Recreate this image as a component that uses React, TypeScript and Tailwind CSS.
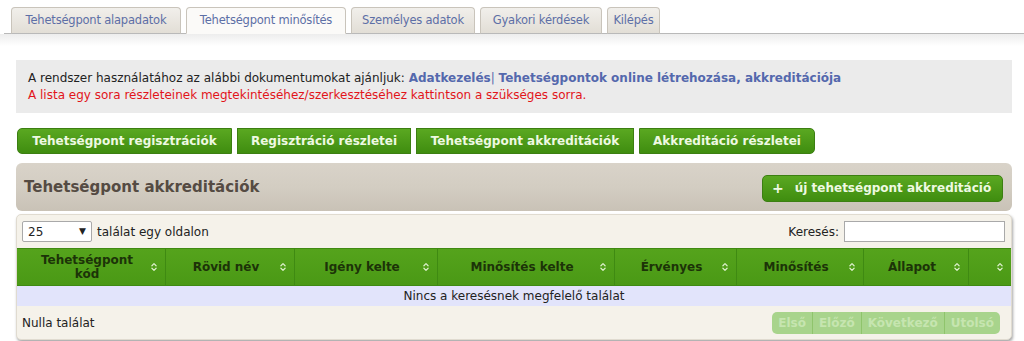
import { ChevronsUpDown } from "lucide-react";

const TABS = [
	{ label: "Tehetségpont alapadatok", active: false, w: "w-[170px]" },
	{ label: "Tehetségpont minősítés", active: true, w: "w-[160px]" },
	{ label: "Személyes adatok", active: false, w: "w-[124px]" },
	{ label: "Gyakori kérdések", active: false, w: "w-[122px]" },
	{ label: "Kilépés", active: false, w: "w-[53px]" },
];

const NAV_BUTTONS = [
	{ label: "Tehetségpont regisztrációk", className: "w-[215px] rounded-l-[5px]" },
	{ label: "Regisztráció részletei", className: "w-[174px]" },
	{ label: "Tehetségpont akkreditációk", className: "w-[218px]" },
	{ label: "Akkreditáció részletei", className: "w-[176px] rounded-r-[5px]" },
];

const COLUMNS = [
	{ label: "Tehetségpont kód", w: "w-[149px]" },
	{ label: "Rövid név", w: "w-[129px]" },
	{ label: "Igény kelte", w: "w-[143px]" },
	{ label: "Minősítés kelte", w: "w-[177px]" },
	{ label: "Érvényes", w: "w-[122px]" },
	{ label: "Minősítés", w: "w-[127px]" },
	{ label: "Állapot", w: "w-[105px]" },
	{ label: "", w: "flex-1" },
];

function SortIcon() {
	return <ChevronsUpDown className="w-[10px] h-[10px] text-[#dcefcb] shrink-0" strokeWidth={3} />;
}

export default function App() {
	return (
		<div className="w-[1024px] h-[341px] bg-white overflow-hidden font-['DejaVu_Sans',sans-serif] text-[12px] text-[#222]">
			{/* tabs */}
			<div className="flex items-end gap-[5px] pl-[7px] pt-[7px] h-[34px] border-b border-[#b9b9b9] ml-[4px]">
				{TABS.map((t) => (
					<div
						key={t.label}
						className={
							"h-[27px] -mb-px flex items-center justify-center whitespace-nowrap rounded-t-[4px] border border-[#c9c4bb] text-[#5d6fa6] text-[11.5px] tracking-[-0.2px] " +
							t.w +
							" " +
							(t.active ? "bg-[#fbfaf8] border-b-[#fbfaf8]" : "bg-gradient-to-b from-[#f1efeb] to-[#e2ded6] border-b-[#b9b9b9]")
						}
					>
						{t.label}
					</div>
				))}
			</div>
			<div className="h-[12px] bg-gradient-to-b from-[#ededed] to-white" />

			<div className="px-[16px] pt-[14px]">
				{/* info box */}
				<div className="bg-[#ebebeb] h-[53px] pl-[12px] pt-[10px] leading-[17px] w-[996px]">
					<div>
						A rendszer használatához az alábbi dokumentumokat ajánljuk:{" "}
						<span className="font-bold text-[#5468ad]">Adatkezelés</span>
						<span className="text-[#5468ad]">|</span>{" "}
						<span className="font-bold text-[#5468ad]">Tehetségpontok online létrehozása, akkreditációja</span>
					</div>
					<div className="text-[#e2141a]">
						A lista egy sora részleteinek megtekintéséhez/szerkesztéséhez kattintson a szükséges sorra.
					</div>
				</div>

				{/* nav buttons */}
				<div className="flex gap-[5px] mt-[15px] pl-[1px]">
					{NAV_BUTTONS.map((b) => (
						<div
							key={b.label}
							className={
								"h-[26px] flex items-center justify-center font-bold text-[#eef9e2] bg-gradient-to-b from-[#5aa821] to-[#3f8d0f] border border-[#3c7f12] " +
								b.className
							}
						>
							{b.label}
						</div>
					))}
				</div>

				{/* panel header */}
				<div className="mt-[9px] h-[48px] w-[996px] rounded-[6px] bg-gradient-to-b from-[#d9d3c9] via-[#d3cdc2] to-[#c9c2b6] flex items-center justify-between pl-[8px] pr-[9px]">
					<div className="font-bold text-[15px] text-[#554b43]">Tehetségpont akkreditációk</div>
					<div className="h-[27px] w-[241px] rounded-[5px] bg-gradient-to-b from-[#5aa821] to-[#3f8d0f] border border-[#3c7f12] flex items-center pl-[9px] gap-[11px] font-bold text-[#eef9e2] mt-[2px]">
						<span className="text-[14px]">+</span>
						<span>új tehetségpont akkreditáció</span>
					</div>
				</div>

				{/* table wrapper */}
				<div className="mt-[3px] w-[996px] h-[126px] rounded-[5px] bg-[#f5f2ea] border border-[#e0dbd0] shadow-[1px_2px_3px_rgba(0,0,0,0.35)] overflow-hidden flex flex-col">
					<div className="h-[33px] flex items-center justify-between pl-[5px] pr-[6px]">
						<div className="flex items-center gap-[5px]">
							<div className="w-[70px] h-[21px] bg-white border border-[#a9a9a9] rounded-[2px] flex items-center justify-between px-[5px] text-[12px]">
								<span>25</span>
								<span className="text-[9px]">▼</span>
							</div>
							<span>találat egy oldalon</span>
						</div>
						<div className="flex items-center gap-[5px]">
							<span>Keresés:</span>
							<div className="w-[161px] h-[21px] bg-white border border-[#a9a9a9]" />
						</div>
					</div>
					<div className="flex h-[38px] bg-gradient-to-b from-[#55a31c] to-[#4a9915] border-y border-[#3f8a12]">
						{COLUMNS.map((c, i) => (
							<div
								key={i}
								className={
									"flex items-center pr-[6px] pl-[8px] border-r border-[#3f8a12] last:border-r-0 " + c.w
								}
							>
								<div className="flex-1 text-center font-bold text-[#1c3308] leading-[14px]">
									{c.label === "Tehetségpont kód" ? (
										<>
											Tehetségpont
											<br />
											kód
										</>
									) : (
										c.label
									)}
								</div>
								<SortIcon />
							</div>
						))}
					</div>
					<div className="h-[20px] bg-[#e2e4fb] flex items-center justify-center">
						Nincs a keresésnek megfelelő találat
					</div>
					<div className="flex-1 flex items-center justify-between pl-[5px] pr-[11px]">
						<span>Nulla találat</span>
						<div className="flex h-[22px] rounded-[5px] bg-[#a8d48c] overflow-hidden font-bold text-[#c6e5b0]">
							{["Első", "Előző", "Következő", "Utolsó"].map((p, i) => (
								<div
									key={p}
									className={"px-[6px] flex items-center " + (i > 0 ? "border-l border-[#8fc46c]" : "")}
								>
									{p}
								</div>
							))}
						</div>
					</div>
				</div>
			</div>
		</div>
	);
}
